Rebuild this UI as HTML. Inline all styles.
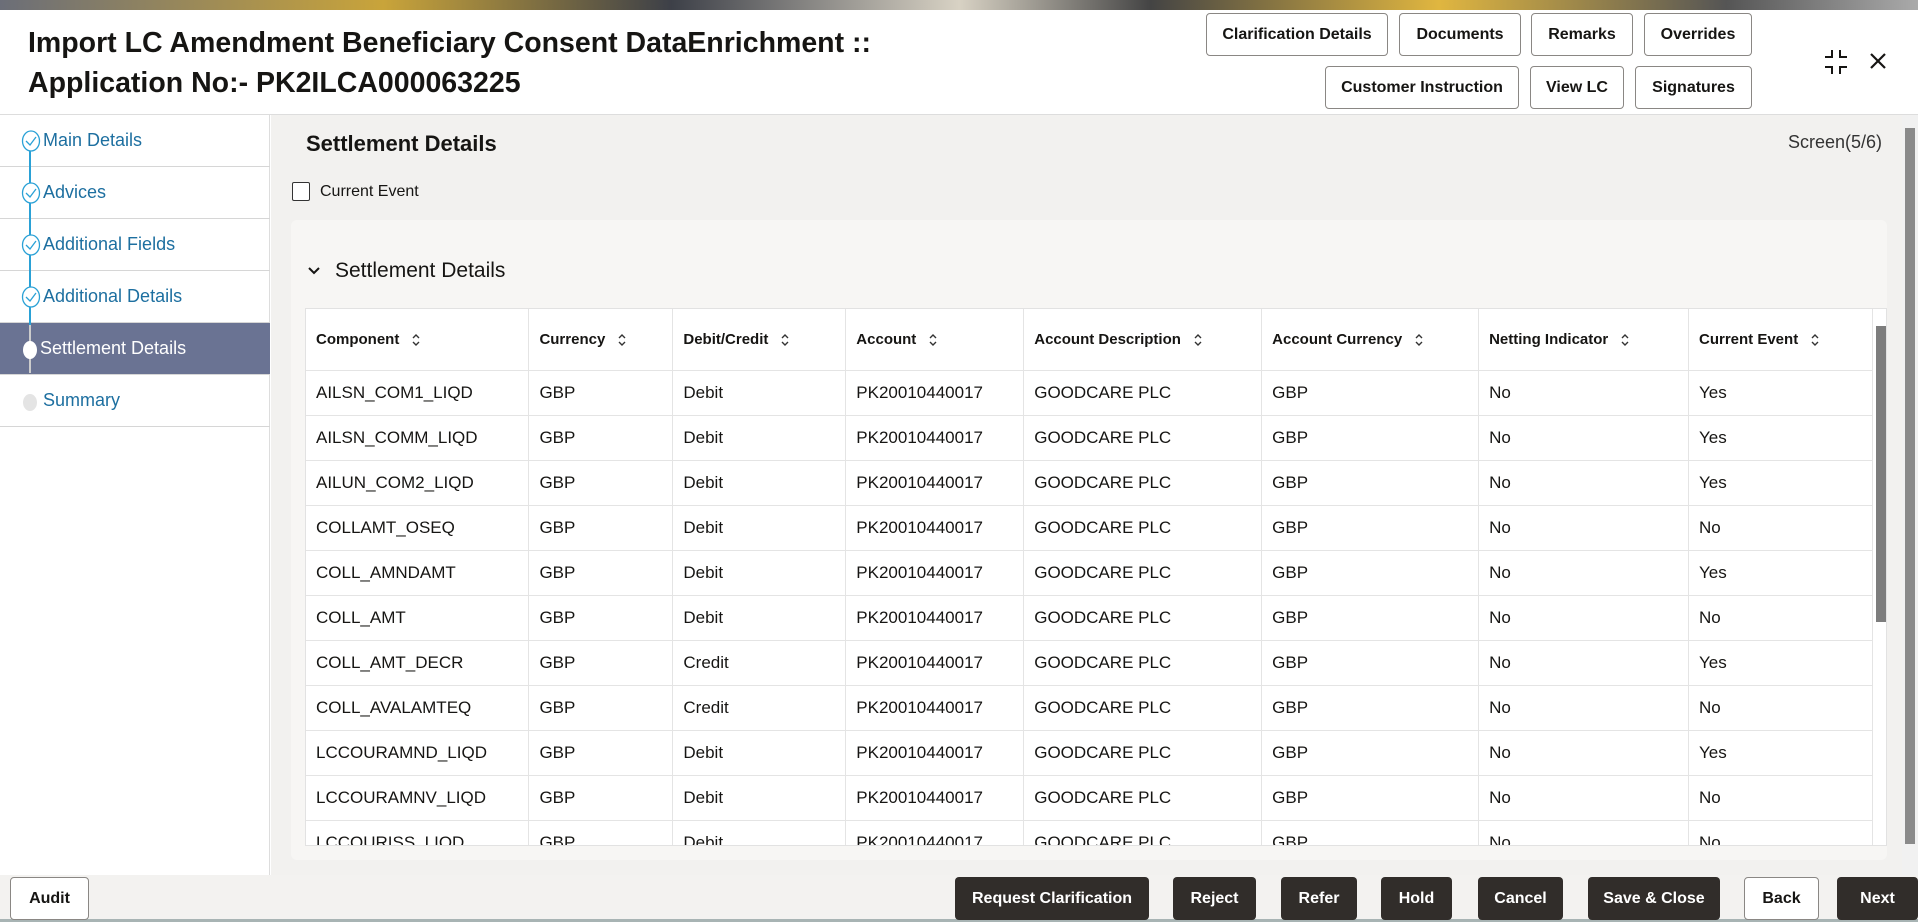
<!DOCTYPE html>
<html><head><meta charset="utf-8"><style>
*{box-sizing:border-box;margin:0;padding:0}
body{width:1918px;height:922px;overflow:hidden;font-family:"Liberation Sans",sans-serif;background:#fff;position:relative;color:#161513}
.banner{position:absolute;left:0;top:0;width:1918px;height:10px;background:linear-gradient(90deg,#6b6e78,#c9a43a 20%,#3d4048 35%,#d8d2c4 50%,#444 60%,#e0b640 75%,#555 90%,#aaa)}
.hdr{position:absolute;left:0;top:10px;width:1918px;height:105px;background:#fff;border-bottom:1px solid #ddd}
.t{position:absolute;left:28px;font-size:28.5px;font-weight:bold;color:#161513}
.btn{position:absolute;height:43px;border:1px solid #8a8784;border-radius:4px;background:#fff;font-size:16px;font-weight:bold;display:flex;align-items:center;justify-content:center;color:#161513}
.side{position:absolute;left:0;top:115px;width:270px;height:760px;background:#fff;border-right:1px solid #ddd}
.si{position:absolute;left:0;width:270px;height:52px;border-bottom:1px solid #d6d6d6;font-size:18px;color:#1d6fa0;padding-left:43px;display:flex;align-items:center}
.si.a{background:#6a7393;color:#fff;padding-left:40px}
.line{position:absolute;left:29px;width:2px;background:#2aa1d6}
.chk{position:absolute;left:21px}
.main{position:absolute;left:271px;top:115px;width:1631px;height:760px;background:#f2f1ef}
.panel{position:absolute;left:291px;top:220px;width:1596px;height:640px;background:#f7f6f4;border-radius:6px}
table{position:absolute;left:305px;top:308px;width:1567px;border-collapse:collapse;background:#fff;font-size:17px}
.tw{position:absolute;left:305px;top:308px;width:1582px;height:538px;overflow:hidden;background:#fff;border:1px solid #e2e2e2}
th{height:61px;text-align:left;font-size:15px;font-weight:bold;padding-left:10px;border-right:1px solid #e4e4e4;border-bottom:1px solid #e4e4e4;white-space:nowrap}
td{height:45px;padding-left:10px;border-right:1px solid #e4e4e4;border-bottom:1px solid #e4e4e4}
.s{display:inline-block;vertical-align:middle;margin-left:12px}
.foot{position:absolute;left:0;top:875px;width:1918px;height:47px;background:#f3f2f0;border-bottom:3px solid #a8b4b4}
.fb{position:absolute;top:2px;height:43px;border-radius:4px;background:#312d2a;color:#fff;font-size:16px;font-weight:bold;display:flex;align-items:center;justify-content:center}
.fb.w{background:#fff;color:#161513;border:1px solid #8a8784}
</style></head><body>
<div class="banner"></div>
<div class="hdr">
<div class="t" style="top:17px">Import LC Amendment Beneficiary Consent DataEnrichment ::</div>
<div class="t" style="top:57px">Application No:- PK2ILCA000063225</div>
</div>
<div class="btn" style="left:1206px;top:13px;width:182px">Clarification Details</div>
<div class="btn" style="left:1399px;top:13px;width:122px">Documents</div>
<div class="btn" style="left:1531px;top:13px;width:102px">Remarks</div>
<div class="btn" style="left:1644px;top:13px;width:108px">Overrides</div>
<div class="btn" style="left:1325px;top:66px;width:194px">Customer Instruction</div>
<div class="btn" style="left:1530px;top:66px;width:94px">View LC</div>
<div class="btn" style="left:1635px;top:66px;width:117px">Signatures</div>
<svg style="position:absolute;left:1822px;top:48px" width="28" height="28" viewBox="0 0 28 28" fill="none" stroke="#161513" stroke-width="2"><path d="M10 2v7H3M18 2v7h7M10 26v-7H3M18 26v-7h7"/></svg>
<svg style="position:absolute;left:1868px;top:51px" width="20" height="20" viewBox="0 0 20 20" stroke="#161513" stroke-width="2.2"><path d="M3 3l14 14M17 3L3 17"/></svg>
<div class="side">
<div class="si" style="top:0">Main Details</div>
<div class="si" style="top:52px">Advices</div>
<div class="si" style="top:104px">Additional Fields</div>
<div class="si" style="top:156px">Additional Details</div>
<div class="si a" style="top:208px">Settlement Details</div>
<div class="si" style="top:260px">Summary</div>
<div class="line" style="top:30px;height:180px"></div>
<svg class="chk" style="top:15px" width="20" height="22" viewBox="0 0 20 22" fill="#fff" stroke="#2aa1d6" stroke-width="1.3"><ellipse cx="10" cy="11" rx="8.5" ry="10"/><path d="M5 11l4 4 6-8" fill="none"/></svg>
<svg class="chk" style="top:67px" width="20" height="22" viewBox="0 0 20 22" fill="#fff" stroke="#2aa1d6" stroke-width="1.3"><ellipse cx="10" cy="11" rx="8.5" ry="10"/><path d="M5 11l4 4 6-8" fill="none"/></svg>
<svg class="chk" style="top:119px" width="20" height="22" viewBox="0 0 20 22" fill="#fff" stroke="#2aa1d6" stroke-width="1.3"><ellipse cx="10" cy="11" rx="8.5" ry="10"/><path d="M5 11l4 4 6-8" fill="none"/></svg>
<svg class="chk" style="top:171px" width="20" height="22" viewBox="0 0 20 22" fill="#fff" stroke="#2aa1d6" stroke-width="1.3"><ellipse cx="10" cy="11" rx="8.5" ry="10"/><path d="M5 11l4 4 6-8" fill="none"/></svg>
<div class="line" style="top:210px;height:48px;background:#ccc"></div>
<div style="position:absolute;left:23px;top:226px;width:14px;height:18px;border-radius:50%;background:#fff"></div>
<div style="position:absolute;left:23px;top:279px;width:14px;height:17px;border-radius:50%;background:#e4e4e4"></div>
</div>
<div class="main"></div>
<div style="position:absolute;left:306px;top:131px;font-size:22px;font-weight:bold">Settlement Details</div>
<div style="position:absolute;left:292px;top:182px;width:18px;height:19px;border:1.5px solid #333;border-radius:2px;background:#fff"></div>
<div style="position:absolute;left:320px;top:183px;font-size:16px">Current Event</div>
<div style="position:absolute;left:1788px;top:132px;font-size:18px;color:#333">Screen(5/6)</div>
<div style="position:absolute;left:1902px;top:115px;width:16px;height:760px;background:#f1f1f1"></div>
<div style="position:absolute;left:1905px;top:128px;width:10px;height:716px;background:#8a8a8a"></div>
<div class="panel"></div>
<svg style="position:absolute;left:306px;top:263px" width="16" height="16" viewBox="0 0 16 16" fill="none" stroke="#161513" stroke-width="2"><path d="M3 5l5 5 5-5"/></svg>
<div style="position:absolute;left:335px;top:259px;font-size:21px">Settlement Details</div>
<div class="tw">
<table style="left:0;top:0">
<colgroup><col style="width:223px"><col style="width:144px"><col style="width:173px"><col style="width:178px"><col style="width:238px"><col style="width:217px"><col style="width:210px"><col style="width:184px"></colgroup>
<tr>
<th>Component<svg class="s" width="10" height="14" viewBox="0 0 10 14" fill="none" stroke="#333" stroke-width="1.4"><path d="M2 5l3-3 3 3M2 9l3 3 3-3"/></svg></th>
<th>Currency<svg class="s" width="10" height="14" viewBox="0 0 10 14" fill="none" stroke="#333" stroke-width="1.4"><path d="M2 5l3-3 3 3M2 9l3 3 3-3"/></svg></th>
<th>Debit/Credit<svg class="s" width="10" height="14" viewBox="0 0 10 14" fill="none" stroke="#333" stroke-width="1.4"><path d="M2 5l3-3 3 3M2 9l3 3 3-3"/></svg></th>
<th>Account<svg class="s" width="10" height="14" viewBox="0 0 10 14" fill="none" stroke="#333" stroke-width="1.4"><path d="M2 5l3-3 3 3M2 9l3 3 3-3"/></svg></th>
<th>Account Description<svg class="s" width="10" height="14" viewBox="0 0 10 14" fill="none" stroke="#333" stroke-width="1.4"><path d="M2 5l3-3 3 3M2 9l3 3 3-3"/></svg></th>
<th>Account Currency<svg class="s" width="10" height="14" viewBox="0 0 10 14" fill="none" stroke="#333" stroke-width="1.4"><path d="M2 5l3-3 3 3M2 9l3 3 3-3"/></svg></th>
<th>Netting Indicator<svg class="s" width="10" height="14" viewBox="0 0 10 14" fill="none" stroke="#333" stroke-width="1.4"><path d="M2 5l3-3 3 3M2 9l3 3 3-3"/></svg></th>
<th>Current Event<svg class="s" width="10" height="14" viewBox="0 0 10 14" fill="none" stroke="#333" stroke-width="1.4"><path d="M2 5l3-3 3 3M2 9l3 3 3-3"/></svg></th></tr>
<tr><td>AILSN_COM1_LIQD</td><td>GBP</td><td>Debit</td><td>PK20010440017</td><td>GOODCARE PLC</td><td>GBP</td><td>No</td><td>Yes</td></tr>
<tr><td>AILSN_COMM_LIQD</td><td>GBP</td><td>Debit</td><td>PK20010440017</td><td>GOODCARE PLC</td><td>GBP</td><td>No</td><td>Yes</td></tr>
<tr><td>AILUN_COM2_LIQD</td><td>GBP</td><td>Debit</td><td>PK20010440017</td><td>GOODCARE PLC</td><td>GBP</td><td>No</td><td>Yes</td></tr>
<tr><td>COLLAMT_OSEQ</td><td>GBP</td><td>Debit</td><td>PK20010440017</td><td>GOODCARE PLC</td><td>GBP</td><td>No</td><td>No</td></tr>
<tr><td>COLL_AMNDAMT</td><td>GBP</td><td>Debit</td><td>PK20010440017</td><td>GOODCARE PLC</td><td>GBP</td><td>No</td><td>Yes</td></tr>
<tr><td>COLL_AMT</td><td>GBP</td><td>Debit</td><td>PK20010440017</td><td>GOODCARE PLC</td><td>GBP</td><td>No</td><td>No</td></tr>
<tr><td>COLL_AMT_DECR</td><td>GBP</td><td>Credit</td><td>PK20010440017</td><td>GOODCARE PLC</td><td>GBP</td><td>No</td><td>Yes</td></tr>
<tr><td>COLL_AVALAMTEQ</td><td>GBP</td><td>Credit</td><td>PK20010440017</td><td>GOODCARE PLC</td><td>GBP</td><td>No</td><td>No</td></tr>
<tr><td>LCCOURAMND_LIQD</td><td>GBP</td><td>Debit</td><td>PK20010440017</td><td>GOODCARE PLC</td><td>GBP</td><td>No</td><td>Yes</td></tr>
<tr><td>LCCOURAMNV_LIQD</td><td>GBP</td><td>Debit</td><td>PK20010440017</td><td>GOODCARE PLC</td><td>GBP</td><td>No</td><td>No</td></tr>
<tr><td>LCCOURISS_LIQD</td><td>GBP</td><td>Debit</td><td>PK20010440017</td><td>GOODCARE PLC</td><td>GBP</td><td>No</td><td>No</td></tr>
</table>
<div style="position:absolute;left:1567px;top:0;width:15px;height:538px;background:#fff"></div>
<div style="position:absolute;left:1570px;top:17px;width:10px;height:296px;background:#7d7d7d"></div>
</div>
<div class="foot">
<div class="fb w" style="left:10px;width:79px">Audit</div>
<div class="fb" style="left:955px;width:194px">Request Clarification</div>
<div class="fb" style="left:1173px;width:83px">Reject</div>
<div class="fb" style="left:1281px;width:76px">Refer</div>
<div class="fb" style="left:1381px;width:71px">Hold</div>
<div class="fb" style="left:1478px;width:85px">Cancel</div>
<div class="fb" style="left:1588px;width:132px">Save &amp; Close</div>
<div class="fb w" style="left:1744px;width:75px">Back</div>
<div class="fb" style="left:1837px;width:81px">Next</div>
</div>
</body></html>
